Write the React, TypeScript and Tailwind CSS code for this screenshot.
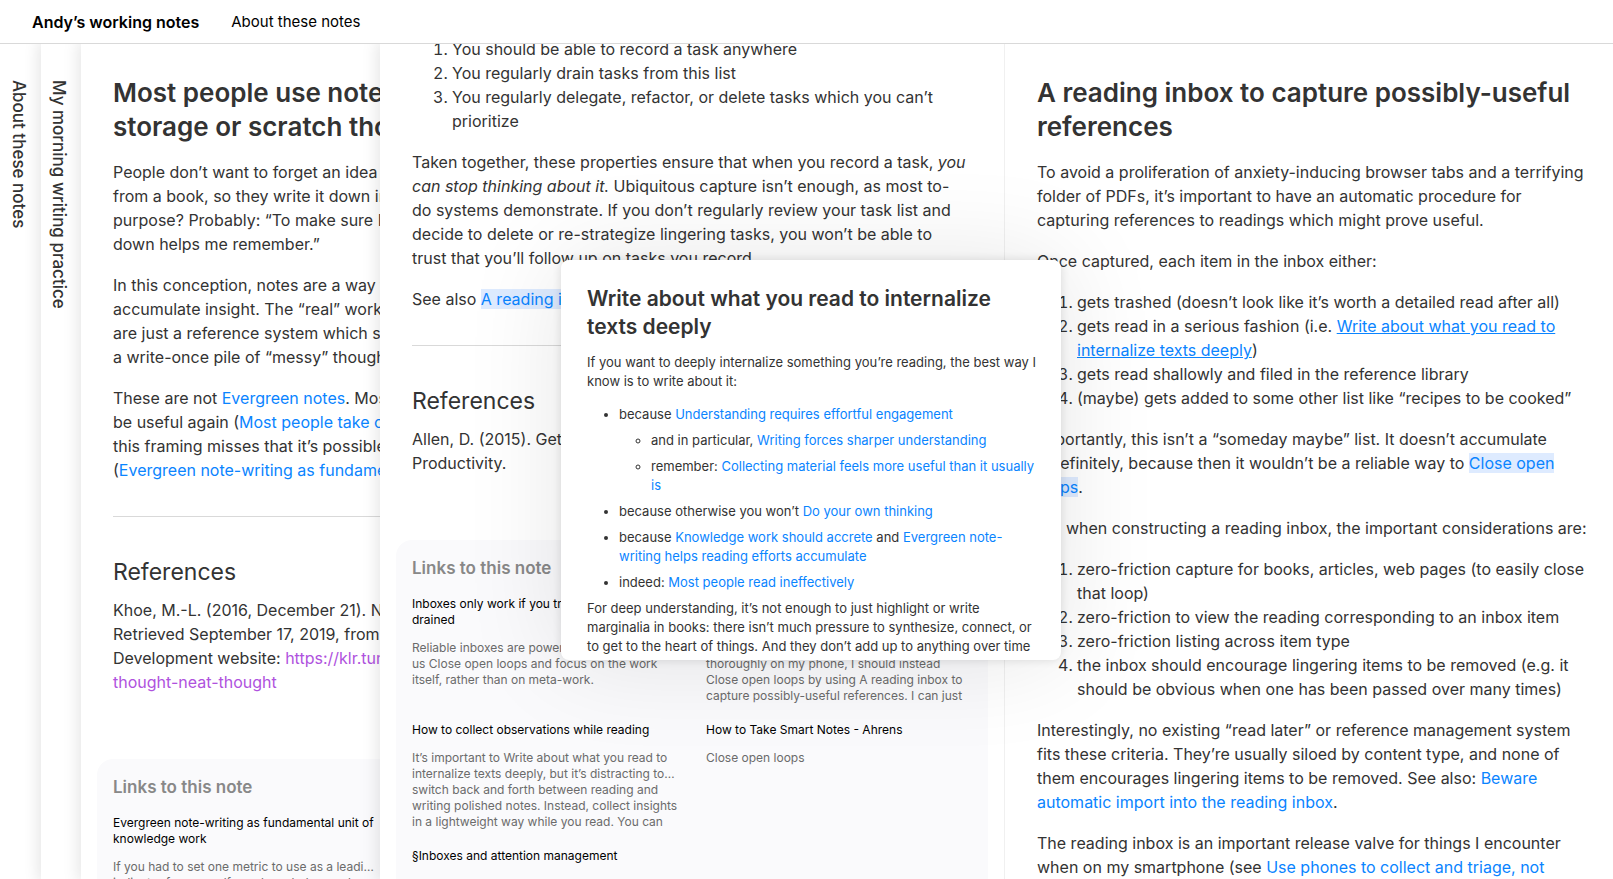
import React from "react";

type Kids = { children: React.ReactNode };

function NoteLink({ children, tone = "plain" }: Kids & { tone?: "plain" | "open" | "hovered" | "external" }) {
  const tones = {
    plain: "text-[#0a84ff]",
    open: "text-[#0a84ff] bg-[#deebff]",
    hovered: "text-[#0a84ff] underline",
    external: "text-[#af52de]",
  };
  return (
    <a href="#" className={tones[tone]}>
      {children}
    </a>
  );
}

function Title({ children }: Kids) {
  return <h1 className="mb-4 text-[26px] leading-[34px] font-semibold">{children}</h1>;
}

function P({ children }: Kids) {
  return <p className="mb-[17px]">{children}</p>;
}

function Steps({ children }: Kids) {
  return <ol className="mb-[17px] list-decimal pl-10">{children}</ol>;
}

function References({ children }: Kids) {
  return (
    <section>
      <hr className="mt-[34px] border-t border-[#d9d9d9]" />
      <h2 className="mt-[38px] mb-[9px] text-[23px] leading-[34px]">References</h2>
      <p>{children}</p>
    </section>
  );
}

type Backlink = { title: React.ReactNode; body: React.ReactNode };

function Backlinks({ items }: { items: Backlink[] }) {
  return (
    <aside className="-mx-4 mt-[65px] rounded-2xl bg-[#fafafc] px-4 pt-4 pb-20">
      <h3 className="mb-4 text-[17px] leading-6 font-semibold text-[#888]">Links to this note</h3>
      <div className="grid grid-cols-2 gap-x-7 gap-y-[18px] text-xs leading-4 whitespace-nowrap">
        {items.map((item, i) => (
          <a href="#" key={i} className="block">
            <span className="mb-3 block text-black">{item.title}</span>
            <span className="block text-[#6b6b6b]">{item.body}</span>
          </a>
        ))}
      </div>
    </aside>
  );
}

function Spine({ children, raised }: Kids & { raised?: boolean }) {
  return (
    <section
      className={
        raised
          ? "z-10 flex w-10 shrink-0 justify-center bg-white pt-9 pr-1 shadow-[0_0_15px_3px_rgba(0,0,0,0.1)]"
          : "flex w-[41px] shrink-0 justify-center bg-white pt-9 pr-1"
      }
    >
      <a href="#" className="text-[17px] leading-6 font-medium whitespace-nowrap [writing-mode:vertical-rl]">
        {children}
      </a>
    </section>
  );
}

const previousBacklinks: Backlink[] = [
  {
    title: <>Evergreen note-writing as fundamental unit of<br />knowledge work</>,
    body: <>If you had to set one metric to use as a leadi…<br />indicator for yourself as a knowledge worker,<br />the best I know might be the number of</>,
  },
];

const currentBacklinks: Backlink[] = [
  {
    title: <>Inboxes only work if you trust how they’re<br />drained</>,
    body: <>Reliable inboxes are powerful: they help<br />us Close open loops and focus on the work<br />itself, rather than on meta-work.</>,
  },
  {
    title: <>Use phones to collect and triage</>,
    body: <>When I see something I want to read<br />on the go, rather than reading it<br />thoroughly on my phone, I should instead<br />Close open loops by using A reading inbox to<br />capture possibly-useful references. I can just</>,
  },
  {
    title: <>How to collect observations while reading</>,
    body: <>It’s important to Write about what you read to<br />internalize texts deeply, but it’s distracting to…<br />switch back and forth between reading and<br />writing polished notes. Instead, collect insights<br />in a lightweight way while you read. You can</>,
  },
  { title: <>How to Take Smart Notes - Ahrens</>, body: <>Close open loops</> },
  { title: <>§Inboxes and attention management</>, body: <>Inboxes collect</> },
];

function Preview() {
  return (
    <div
      role="tooltip"
      className="absolute top-[260px] left-[561px] z-30 h-[400px] w-[500px] overflow-hidden rounded-lg bg-white px-[26px] pt-[25px] text-[13px] leading-[19px] whitespace-nowrap shadow-[0_0_10px_0_rgba(0,0,0,0.12),0_0_100px_0_rgba(0,0,0,0.1)]"
    >
      <h2 className="mb-3 text-[21px] leading-7 font-semibold">
        Write about what you read to internalize
        <br />
        texts deeply
      </h2>
      <p className="mb-3.5">
        If you want to deeply internalize something you’re reading, the best way I
        <br />
        know is to write about it:
      </p>
      <ul className="mb-[7px] flex list-disc flex-col gap-[7px] pl-8">
        <li>
          because <NoteLink>Understanding requires effortful engagement</NoteLink>
          <ul className="mt-[7px] flex list-[circle] flex-col gap-[7px] pl-8">
            <li>
              and in particular, <NoteLink>Writing forces sharper understanding</NoteLink>
            </li>
            <li>
              remember: <NoteLink>Collecting material feels more useful than it usually<br />is</NoteLink>
            </li>
          </ul>
        </li>
        <li>
          because otherwise you won’t <NoteLink>Do your own thinking</NoteLink>
        </li>
        <li>
          because <NoteLink>Knowledge work should accrete</NoteLink> and{" "}
          <NoteLink>Evergreen note-<br />writing helps reading efforts accumulate</NoteLink>
        </li>
        <li>
          indeed: <NoteLink>Most people read ineffectively</NoteLink>
        </li>
      </ul>
      <p>
        For deep understanding, it’s not enough to just highlight or write
        <br />
        marginalia in books: there isn’t much pressure to synthesize, connect, or
        <br />
        to get to the heart of things. And they don’t add up to anything over time
      </p>
    </div>
  );
}

export default function App() {
  return (
    <div className="relative flex h-screen flex-col overflow-hidden bg-white font-['Inter',sans-serif] text-base leading-6 text-[#333]">
      <header className="z-20 flex h-11 shrink-0 items-center gap-8 border-b border-[#d9d9d9] bg-white px-8 text-black">
        <a href="#" className="font-semibold">Andy’s working notes</a>
        <a href="#" className="text-[15px] leading-6">About these notes</a>
      </header>

      <main className="flex min-h-0 flex-1 whitespace-nowrap">
        <Spine>About these notes</Spine>
        <Spine raised>My morning writing practice</Spine>

        <div className="z-10 w-[299px] shrink-0 overflow-hidden bg-white shadow-[0_0_15px_3px_rgba(0,0,0,0.1)]">
          <article className="w-[624px] px-8 pt-8">
            <Title>Most people use notes as a bucket for<br />storage or scratch thoughts</Title>
            <P>
              People don’t want to forget an idea or a passage<br />
              from a book, so they write it down in a note. Its<br />
              purpose? Probably: “To make sure I don’t forget. Writing it<br />
              down helps me remember.”
            </P>
            <P>
              In this conception, notes are a way to remember, not to<br />
              accumulate insight. The “real” work happens elsewhere; notes<br />
              are just a reference system which supports that work, or<br />
              a write-once pile of “messy” thoughts.
            </P>
            <p>
              These are not <NoteLink>Evergreen notes</NoteLink>. Most such notes will never<br />
              be useful again (<NoteLink>Most people take only transient notes</NoteLink>), and<br />
              this framing misses that it’s possible to accumulate insight<br />
              (<NoteLink>Evergreen note-writing as fundamental unit of knowledge work</NoteLink>)
            </p>
            <References>
              Khoe, M.-L. (2016, December 21). Neat thought.<br />
              Retrieved September 17, 2019, from Khan Academy<br />
              Development website:{" "}
              <NoteLink tone="external">https://klr.tumblr.com/post/<br />thought-neat-thought</NoteLink>
            </References>
            <Backlinks items={previousBacklinks} />
          </article>
        </div>

        <div className="z-10 w-[624px] shrink-0 overflow-hidden bg-white shadow-[0_0_15px_3px_rgba(0,0,0,0.1)]">
          <article className="-mt-[7px] px-8">
            <Steps>
              <li>You should be able to record a task anywhere</li>
              <li>You regularly drain tasks from this list</li>
              <li>You regularly delegate, refactor, or delete tasks which you can’t<br />prioritize</li>
            </Steps>
            <P>
              Taken together, these properties ensure that when you record a task, <em>you<br />
              can stop thinking about it.</em> Ubiquitous capture isn’t enough, as most to-<br />
              do systems demonstrate. If you don’t regularly review your task list and<br />
              decide to delete or re-strategize lingering tasks, you won’t be able to<br />
              trust that you’ll follow up on tasks you record.
            </P>
            <p>
              See also <NoteLink tone="open">A reading inbox to capture possibly-useful references</NoteLink>
            </p>
            <References>
              Allen, D. (2015). Getting Things Done: The Art of Stress-Free<br />
              Productivity.
            </References>
            <Backlinks items={currentBacklinks} />
          </article>
        </div>

        <div className="z-20 min-w-0 flex-1 overflow-hidden border-l border-[#f0f0f0] bg-white">
          <article className="px-8 pt-8">
            <Title>A reading inbox to capture possibly-useful<br />references</Title>
            <P>
              To avoid a proliferation of anxiety-inducing browser tabs and a terrifying<br />
              folder of PDFs, it’s important to have an automatic procedure for<br />
              capturing references to readings which might prove useful.
            </P>
            <P>Once captured, each item in the inbox either:</P>
            <Steps>
              <li>gets trashed (doesn’t look like it’s worth a detailed read after all)</li>
              <li>
                gets read in a serious fashion (i.e.{" "}
                <NoteLink tone="hovered">Write about what you read to<br />internalize texts deeply</NoteLink>)
              </li>
              <li>gets read shallowly and filed in the reference library</li>
              <li>(maybe) gets added to some other list like “recipes to be cooked”</li>
            </Steps>
            <P>
              Importantly, this isn’t a “someday maybe” list. It doesn’t accumulate<br />
              indefinitely, because then it wouldn’t be a reliable way to{" "}
              <NoteLink tone="open">Close open<br />loops</NoteLink>.
            </P>
            <P>So, when constructing a reading inbox, the important considerations are:</P>
            <Steps>
              <li>zero-friction capture for books, articles, web pages (to easily close<br />that loop)</li>
              <li>zero-friction to view the reading corresponding to an inbox item</li>
              <li>zero-friction listing across item type</li>
              <li>
                the inbox should encourage lingering items to be removed (e.g. it<br />
                should be obvious when one has been passed over many times)
              </li>
            </Steps>
            <P>
              Interestingly, no existing “read later” or reference management system<br />
              fits these criteria. They’re usually siloed by content type, and none of<br />
              them encourages lingering items to be removed. See also:{" "}
              <NoteLink>Beware<br />automatic import into the reading inbox</NoteLink>.
            </P>
            <P>
              The reading inbox is an important release valve for things I encounter<br />
              when on my smartphone (see <NoteLink>Use phones to collect and triage, not<br />to read</NoteLink>)
            </P>
          </article>
        </div>
      </main>

      <Preview />
    </div>
  );
}
